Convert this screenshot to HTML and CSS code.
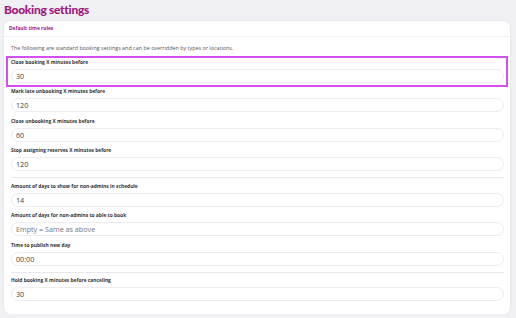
FILE: index.html
```html
<!DOCTYPE html>
<html lang="en">
<head>
  <meta charset="UTF-8">
  <meta name="viewport" content="width=device-width, initial-scale=1.0">
  <title>Booking settings</title>
  <link rel="stylesheet" href="styles.css">
</head>
<body>
<h1 class="page-title">Booking settings</h1>

<div class="card">
  <div class="card-header">Default time rules</div>

  <div class="card-body">
    <p class="description">The following are standard booking settings and can be overridden by types or locations.</p>

    <div class="field field-active">
      <label for="closeBooking">Close booking X minutes before</label>
      <input type="text" id="closeBooking" value="30">
    </div>
    <div class="field">
      <label for="lateUnbooking">Mark late unbooking X minutes before</label>
      <input type="text" id="lateUnbooking" value="120">
    </div>
    <div class="field">
      <label for="closeUnbooking">Close unbooking X minutes before</label>
      <input type="text" id="closeUnbooking" value="60">
    </div>
    <div class="field">
      <label for="stopReserves">Stop assigning reserves X minutes before</label>
      <input type="text" id="stopReserves" value="120">
    </div>

    <hr class="divider">

    <div class="field">
      <label for="daysSchedule">Amount of days to show for non-admins in schedule</label>
      <input type="text" id="daysSchedule" value="14">
    </div>
    <div class="field">
      <label for="daysBook">Amount of days for non-admins to able to book</label>
      <input type="text" id="daysBook" placeholder="Empty = Same as above">
    </div>
    <div class="field">
      <label for="publishTime">Time to publish new day</label>
      <input type="text" id="publishTime" value="00:00">
    </div>

    <hr class="divider">

    <div class="field">
      <label for="holdBooking">Hold booking X minutes before canceling</label>
      <input type="text" id="holdBooking" value="30">
    </div>
  </div>
</div>
</body>
</html>
```

FILE: styles.css
```css
body {
  font-family: 'Open Sans', sans-serif;
  background-color: #f0f0f5;
  margin: 0;
  padding: 3px 6px 0 4px;
}

.page-title {
  font-family: 'Lato', sans-serif;
  font-size: 12px;
  line-height: 14px;
  font-weight: 900;
  letter-spacing: -0.3px;
  color: #a0177f;
  margin: 0 0 4px 0;
}

.card {
  background-color: #fff;
  border-radius: 6px;
  box-shadow: 0 0 2px rgba(0, 0, 0, 0.12);
}

.card-header {
  height: 15px;
  line-height: 15px;
  padding-left: 5px;
  font-size: 4.9px;
  font-weight: bold;
  color: #a0177f;
  border-bottom: 1px solid #f0f0f4;
}

.card-body {
  padding: 7.5px 3px 9px 3px;
}

.description {
  font-size: 5.4px;
  line-height: 7px;
  color: #555;
  margin: 0 0 5px 4px;
}

.field {
  display: flex;
  flex-direction: column;
  height: 29.5px;
  box-sizing: border-box;
  padding: 2px 3px 3.5px 4px;
}

.field-active {
  outline: 2px solid #d44ff0;
  outline-offset: -1px;
}

.field label {
  font-size: 4.9px;
  line-height: 7px;
  font-weight: bold;
  color: #333;
  margin-bottom: 3px;
}

.field input {
  height: 14px;
  box-sizing: border-box;
  border: 1px solid #ececf1;
  border-radius: 8px;
  padding: 0 4px;
  font-family: 'Open Sans', sans-serif;
  font-size: 7.2px;
  color: #444;
  outline: none;
}

.field input::placeholder {
  color: #777;
}

.divider {
  border: none;
  border-top: 1px solid #e8e8ee;
  margin: 2.5px 3px 2.5px 4px;
}
```
